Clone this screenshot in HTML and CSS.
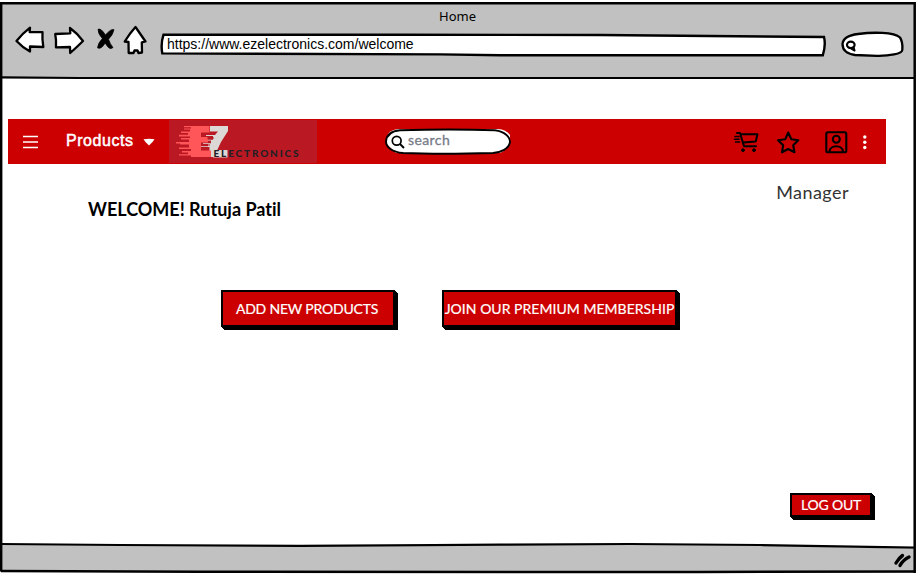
FILE: index.html
```html
<!DOCTYPE html>
<html lang="en">
<head>
<meta charset="utf-8">
<title>Home</title>
<link rel="stylesheet" href="styles.css">
</head>
<body>
<div class="window">
  <header class="chrome">
    <div class="title">Home</div>
    <div class="toolbar">
      <svg class="nav-icons" width="134" height="32" viewBox="14 24 134 32">
        <g fill="#fff" stroke="#000" stroke-width="2.3" stroke-linejoin="round">
          <path d="M16.5 41 Q22 34 30 27.7 L29.7 32 L42.5 32.2 Q42 39 43.3 47 L30 46.5 L30 51.5 Q22 47 16.5 41Z"/>
          <path d="M55.2 34 L70.3 33.4 L70 28 Q77 33 83 41 Q77 47 70.2 53 L70 47 L56 47.4 Q56.5 40 55.2 34Z"/>
          <path d="M135.500 27 L145.500 41.500 L141.800 42.300 L142 52.500 L138.500 53 L137.500 50.300 L134.500 50.500 L133.500 53 L128.700 53 L128.500 42 L124.700 41.500 Q130 33 135.500 27Z"/>
        </g>
        <path d="M98 29.3 Q101 27.8 105.4 35 Q111 28.500 114 29.600 Q113 35 108.500 39.200 Q110 44 113 47.500 Q109.500 51 105.200 43 Q101 50 97.500 47.800 Q98 43 102.400 38.600 Q98 34 98 29.300Z" stroke="#000" stroke-width=".7"/>
      </svg>
      <div class="address">
        <svg class="outline" width="668" height="26" viewBox="159 32 668 26"><path d="M163.5 34.6 L400 34.8 L600 35 L824 37 Q826 45 822.8 55.3 L500 55.2 L440 54.4 L162.3 53.4 Q160.5 44 163.5 34.6Z" fill="#fff" stroke="#000" stroke-width="2.4"/></svg>
        <span class="url">https://www.ezelectronics.com/welcome</span>
      </div>
      <svg class="chrome-search" width="66" height="28" viewBox="840 30 66 28">
        <path d="M858 34 C873 32 894 32 900 37.500 C903 42 902.500 47 902.300 50 C902 54 889 56 877 55.800 L855 55 C845 53.500 842.500 49 842.500 44 C843 38 850 35 858 34Z" fill="#fff" stroke="#000" stroke-width="2.300"/>
        <ellipse cx="850.800" cy="44.800" rx="3.800" ry="3.200" fill="none" stroke="#000" stroke-width="2.200"/><path d="M853.500 46.500L854.800 51.300M850.500 48.300L855 51" stroke="#000" stroke-width="1.800"/>
      </svg>
    </div>
  </header>
  <main class="page">
    <nav class="navbar">
      <svg class="menu" width="16" height="14" viewBox="0 0 16 14"><path d="M0 1.500H15M0 7H15M0 12.400H15" stroke="#fff" stroke-width="1.500" fill="none"/></svg>
      <span class="products">Products</span>
      <svg class="caret" width="12" height="8" viewBox="0 0 12 8"><path d="M.5 1.200Q6 .5 11.500 1.200Q10 4 6 7.500Q2 4 .5 1.200Z" fill="#fff"/></svg>
      <svg class="logo" width="148" height="43" viewBox="169 120 148 43">
        <rect x="169" y="120" width="148" height="43" fill="#ba1923"/>
        <path d="M210 126 H228 V131 L221 142 L214 157 H209.500 V147 H200 V146.300 H208 V144 H203 V143.200 H211 V140.500 H205 V139.700 H213 V136 H206 V135 H215 L218 131.500 H210Z" fill="#dcd8d6"/>
        <path d="M213 150 h14.500 v7.500 h-14.500z" fill="#dcd8d6"/>
        <path d="M184 126H209.500V132.500H201V137H208V142.500H201V150.500H211V157H191V155.500H179V154.200H188V152.500H182V151H191V149H179V147.500H189V144.500H180V143.500H176V142H189V139.500H181V138H190V136.500H179V134.700H188V133H181V131.500H190V129.500H184V128.500H191V127.300H184Z" fill="#ff5659"/>
        <path d="M209 133.500h6M207 138h7M204 145h6" stroke="#ba1923" stroke-width="1"/>
        <text class="logo-text" x="213.500" y="157" textLength="85">ELECTRONICS</text>
      </svg>
      <div class="search">
        <svg class="outline" width="128" height="30" viewBox="384 127 128 30">
          <path d="M398 129 H498 Q506 129.500 510 135 L510 143 Q507 150 500 153 H396 L386.500 144 V138 Q388 130 398 129Z" fill="#fff"/>
          <path d="M400 130.200 Q450 128.700 495 130.200 C505 131.500 510 137 510 142 C509 149 501 152.500 493 153 Q440 154.500 403 153 C392 152 386 147 386 141.500 C386.500 135 392 131 400 130.200Z" fill="none" stroke="#000" stroke-width="1.900"/>
          <circle cx="396.700" cy="140.700" r="4.400" fill="none" stroke="#000" stroke-width="1.700"/><path d="M400 144l4 4" stroke="#000" stroke-width="2"/>
        </svg>
        <span class="placeholder">search</span>
      </div>
      <svg class="actions" width="136" height="26" viewBox="732 129 136 26" fill="none" stroke="#000" stroke-width="2.100" stroke-linejoin="round" stroke-linecap="round">
        <path d="M737 133H740L744 146.200H756M741 134.300H757.500L755.700 141.500L743 142.500" stroke-width="2"/>
        <path d="M735 136.500h4M734.500 139.300h4.500M735.500 142h4" stroke-width="1.600"/>
        <circle cx="743" cy="150.200" r="1.400" fill="#000" stroke-width="1"/><circle cx="754" cy="150.200" r="1.400" fill="#000" stroke-width="1"/>
        <path d="M788.200 132.500L791.300 139.300L798.300 140.200L793.200 145.200L794.500 152.300L788.200 149L782 152.300L783.200 145.200L778 140.200L785.200 139.300Z"/>
        <rect x="826.300" y="132.200" width="20" height="20" rx="1.500"/><circle cx="836.300" cy="139.300" r="3.500"/><path d="M829.500 151.500C830 144.500 842.500 144.500 843 151.500"/>
        <g fill="#fff" stroke="none"><circle cx="864.800" cy="137" r="1.700"/><circle cx="864.800" cy="142.300" r="1.700"/><circle cx="864.800" cy="147.500" r="1.700"/></g>
      </svg>
    </nav>
    <div class="heading">
      <h1 class="welcome">WELCOME! Rutuja Patil</h1>
      <div class="role">Manager</div>
    </div>
    <div class="buttons">
      <button class="btn add">ADD NEW PRODUCTS</button>
      <button class="btn join">JOIN OUR PREMIUM MEMBERSHIP</button>
    </div>
    <div class="bottom"><button class="btn logout">LOG OUT</button></div>
  </main>
  <footer class="status"></footer>
  <svg class="frame" width="918" height="576" viewBox="0 0 918 576" fill="none" stroke="#000">
    <path d="M0 544 L630 544 L750 545 L918 549 V540 H0Z" fill="#fff" stroke="none"/>
    <path d="M0 571.500 L600 572.500 L918 572.500 V576 H0Z" fill="#fff" stroke="none"/>
    <path d="M0 0H918V3H0Z" fill="#fff" stroke="none"/>
    <path d="M0 3.300H914.700V573" stroke-width="2.500"/>
    <path d="M1.200 3V571.500" stroke-width="2.400"/>
    <path d="M1 77.300L80 78H915" stroke-width="2.200"/>
    <path d="M1 544L120 545L300 546L500 544.700L630 544L760 545L914 547.700" stroke-width="2.200"/>
    <path d="M1 571L200 571.800L700 572L914 571.500" stroke-width="2.500"/>
    <path d="M896 563Q899 558 902.500 555.500M900 565.500Q903 560 909 557" stroke-width="3.400" stroke-linecap="round"/>
  </svg>
</div>
</body>
</html>
```
FILE: styles.css
```css
* { box-sizing: border-box; }
body { margin: 0; background: #fff; font-family: Lato, "Noto Sans", sans-serif; color: #000; }
.window { position: relative; width: 918px; height: 576px; overflow: hidden; display: flex; flex-direction: column; }
.frame { position: absolute; inset: 0; pointer-events: none; }
svg { display: block; flex: none; }

.chrome { height: 78px; margin-right: 3px; padding-top: 7px; background: #c1c1c1; }
.title { height: 17px; line-height: 18px; text-align: center; font-family: "Noto Sans", sans-serif; font-size: 13px; }
.toolbar { display: flex; align-items: flex-start; padding-left: 14px; }
.nav-icons { margin-right: 11px; }
.address { position: relative; width: 668px; height: 26px; margin: 8px 13px 0 0; }
.outline { position: absolute; inset: 0; }
.url { position: relative; display: block; padding: 4px 0 0 8px; font: 14px/16px "Liberation Sans", sans-serif; white-space: nowrap; }
.chrome-search { margin-top: 6px; }

.page { flex: 1; padding-top: 41px; }
.navbar { display: flex; align-items: center; width: 878px; height: 45px; margin-left: 8px; background: #c00; }
.menu { margin-left: 15px; }
.products { width: 68px; margin: -1px 9px 0 27px; color: #fff; font: 16px/20px "Liberation Sans", sans-serif; letter-spacing: .55px; -webkit-text-stroke: .5px #fff; }
.caret { margin-right: 14px; }
.logo { margin-top: -1px; }
.logo-text { font: 900 10px Lato, sans-serif; fill: #222025; }
.search { position: relative; width: 128px; height: 30px; margin-left: 67px; }
.placeholder { position: relative; display: block; padding-left: 24px; font-size: 14px; line-height: 26px; letter-spacing: .4px; color: #777b87; -webkit-text-stroke: .3px #777b87; }
.actions { margin-left: 220px; }

.heading { display: flex; justify-content: space-between; height: 58px; padding: 0 69px 0 88px; }
.welcome { margin: 33px 0 0; font-size: 18px; line-height: 24px; font-weight: 700; font-variant-ligatures: none; white-space: nowrap; }
.role { margin-top: 16px; font-size: 18px; line-height: 24px; letter-spacing: .45px; color: #333; }
.buttons { display: flex; gap: 47px; padding: 68px 0 0 221px; }
.btn { display: flex; align-items: center; justify-content: center; padding: 0 2px 0 0; border: 2px solid #000; background: #c00; color: #fff; font: 14px/18px Lato, sans-serif; white-space: nowrap; letter-spacing: -.2px; -webkit-text-stroke: .2px #fff; box-shadow: 1px 1px 0 #000, 2px 2px 0 #000, 3px 3px 0 #000; }
.add { width: 174px; height: 37px; }
.join { width: 235px; height: 37px; padding: 0; letter-spacing: .03px; }
.bottom { display: flex; justify-content: flex-end; padding: 166px 46px 0 0; }
.logout { width: 82px; height: 24px; padding: 0; }
.status { height: 32px; margin-right: 3px; background: #c1c1c1; }
```
